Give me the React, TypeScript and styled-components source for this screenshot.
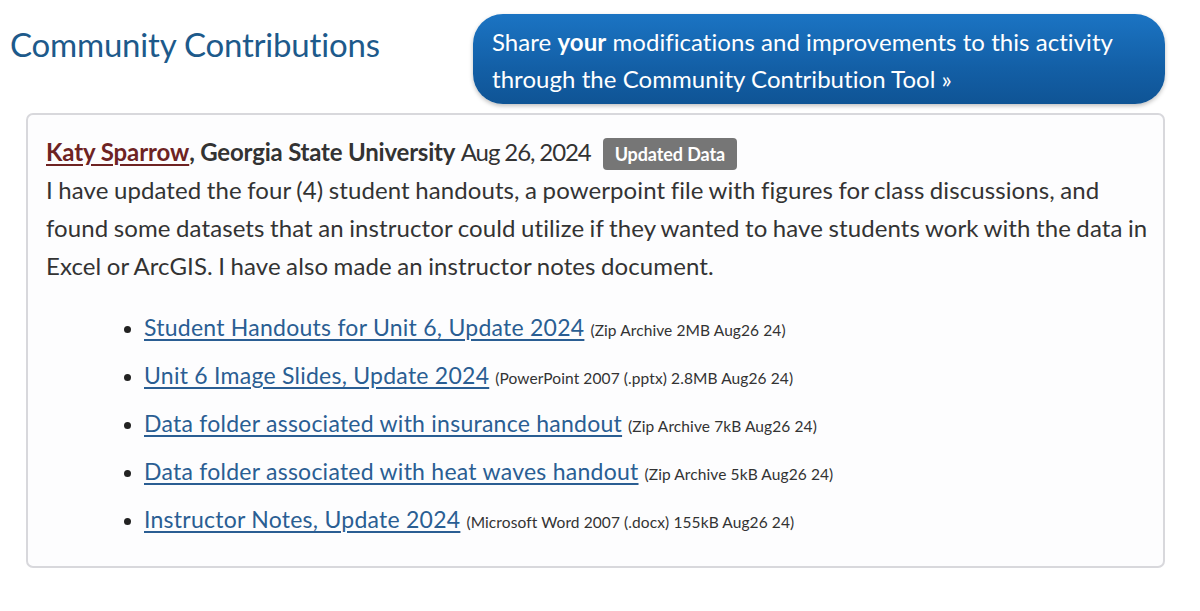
import React from "react";
import styled, { createGlobalStyle } from "styled-components";

const Global = createGlobalStyle`
  html, body { margin: 0; padding: 0; background: #ffffff; }
  body { font-family: "Lato", "Noto Sans", sans-serif; color: #333333; }
  * { box-sizing: border-box; }
`;

const Page = styled.div`
  width: 1200px;
  height: 611px;
  overflow: hidden;
  background: #ffffff;
`;

const Header = styled.header`
  display: flex;
  align-items: flex-start;
  padding: 14px 35px 0 10px;
`;

const Title = styled.h2`
  flex: 1;
  margin: 10px 0 0 0;
  font-size: 33px;
  font-weight: 400;
  line-height: 40px;
  color: #1d5a8b;
  letter-spacing: -0.2px;
`;

const ShareButton = styled.a`
  display: block;
  width: 692px;
  height: 90px;
  padding: 9px 19px;
  border-radius: 30px;
  background: linear-gradient(to bottom, #1b74c3 0%, #135fa6 60%, #0f5495 100%);
  box-shadow: 0 2px 4px rgba(0, 0, 0, 0.25);
  color: #ffffff;
  text-decoration: none;
  font-size: 24px;
  line-height: 37px;
  letter-spacing: 0.05px;
  b { font-weight: 700; }
`;

const Card = styled.section`
  margin: 9px 35px 0 26px;
  height: 455px;
  border: 2px solid #d8d8dc;
  border-radius: 7px;
  background: #fdfdfe;
  padding: 18px 8px 20px 18px;
`;

const Entry = styled.div`
  font-size: 24px;
  line-height: 38px;
  color: #333333;
  letter-spacing: 0.1px;
  word-spacing: -0.8px;
`;

const Author = styled.a`
  color: #6e2323;
  font-weight: 700;
  letter-spacing: -0.1px;
  word-spacing: 0;
  text-decoration: underline;
  text-underline-offset: 3px;
`;

const Strong = styled.strong`
  font-weight: 700;
  color: #333333;
  letter-spacing: -0.2px;
  word-spacing: 0;
`;

const DateText = styled.span`
  letter-spacing: -1.1px;
  word-spacing: 0;
`;

const Badge = styled.span`
  display: inline-block;
  margin-left: 12px;
  padding: 0 12px;
  height: 32px;
  line-height: 32px;
  border-radius: 4px;
  background: #767676;
  color: #ffffff;
  font-size: 18px;
  font-weight: 700;
  vertical-align: 0;
  letter-spacing: -0.1px;
  word-spacing: 0;
`;

const Files = styled.ul`
  margin: 18px 0 0 0;
  padding: 0 0 0 98px;
  list-style: disc;
`;

const FileItem = styled.li`
  height: 48px;
  font-size: 23px;
  line-height: 48px;
  letter-spacing: 0.25px;
  &::marker { color: #222222; font-size: 20px; }
`;

const FileLink = styled.a`
  color: #2a5e93;
  text-decoration: underline;
  text-underline-offset: 3px;
`;

const Meta = styled.span`
  margin-left: 6px;
  font-size: 15.5px;
  line-height: 1;
  color: #333333;
  letter-spacing: 0.1px;
`;

const files = [
  { name: "Student Handouts for Unit 6, Update 2024", meta: "(Zip Archive 2MB Aug26 24)" },
  { name: "Unit 6 Image Slides, Update 2024", meta: "(PowerPoint 2007 (.pptx) 2.8MB Aug26 24)" },
  { name: "Data folder associated with insurance handout", meta: "(Zip Archive 7kB Aug26 24)" },
  { name: "Data folder associated with heat waves handout", meta: "(Zip Archive 5kB Aug26 24)" },
  { name: "Instructor Notes, Update 2024", meta: "(Microsoft Word 2007 (.docx) 155kB Aug26 24)" },
];

export default function App() {
  return (
    <Page>
      <Global />
      <Header>
        <Title>Community Contributions</Title>
        <ShareButton href="#">
          Share <b>your</b> modifications and improvements to this activity
          <br />
          through the Community Contribution Tool »
        </ShareButton>
      </Header>
      <Card>
        <Entry>
          <Author href="#">Katy Sparrow</Author>
          <Strong>, Georgia State University</Strong> <DateText>Aug 26, 2024</DateText>
          <Badge>Updated Data</Badge>
          <br />
          I have updated the four (4) student handouts, a powerpoint file with figures for class discussions, and
          found some datasets that an instructor could utilize if they wanted to have students work with the data in
          Excel or ArcGIS. I have also made an instructor notes document.
        </Entry>
        <Files>
          {files.map((f) => (
            <FileItem key={f.name}>
              <FileLink href="#">{f.name}</FileLink>
              <Meta>{f.meta}</Meta>
            </FileItem>
          ))}
        </Files>
      </Card>
    </Page>
  );
}
